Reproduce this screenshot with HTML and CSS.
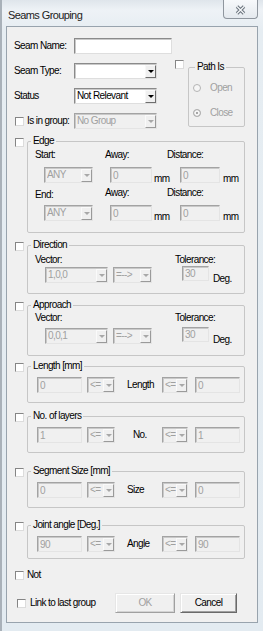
FILE: index.html
```html
<!DOCTYPE html>
<html lang="en">

<head>
    <meta charset="UTF-8">
    <title>Seams Grouping</title>
    <link rel="stylesheet" href="styles.css">
</head>

<body>
    <div class="window">
        <!-- Title bar -->
        <div class="titlebar">
            <span class="title">Seams Grouping</span>
            <span class="close">
                <svg width="11" height="10" viewBox="0 0 11 10">
                    <path d="M2 1.5 L9 8.5 M9 1.5 L2 8.5" stroke="#6a737d" stroke-width="3.4" />
                    <path d="M2 1.5 L9 8.5 M9 1.5 L2 8.5" stroke="#f6f8fa" stroke-width="1.3" />
                </svg>
            </span>
        </div>

        <div class="client">
            <!-- Name / type / status -->
            <div class="top">
                <div class="fields">
                    <label class="lbl">Seam Name:</label>
                    <input class="edit name" type="text">

                    <label class="lbl">Seam Type:</label>
                    <span class="combo wide"><select></select><span class="drop"></span></span>

                    <label class="lbl">Status</label>
                    <span class="combo wide"><select><option>Not Relevant</option></select><span class="drop"></span></span>

                    <label class="lbl lbl-chk"><input type="checkbox" class="chk">Is in group:</label>
                    <span class="combo wide off"><select disabled><option>No Group</option></select><span class="drop"></span></span>
                </div>

                <div class="path">
                    <input type="checkbox" class="chk">
                    <fieldset class="grp path-grp">
                        <legend>Path Is</legend>
                        <label class="radio"><input type="radio" name="path" disabled>Open</label>
                        <label class="radio second"><input type="radio" name="path" disabled checked>Close</label>
                    </fieldset>
                </div>
            </div>

            <!-- Edge -->
            <div class="section s-edge">
                <input type="checkbox" class="chk">
                <fieldset class="grp">
                    <legend>Edge</legend>
                    <div class="edge-body">
                        <span>Start:</span>
                        <span>Away:</span>
                        <span>Distance:</span>

                        <span class="combo off any"><select disabled><option>ANY</option></select><span class="drop"></span></span>
                        <span class="pair away"><input class="edit" type="text" value="0" disabled><span class="unit">mm</span></span>
                        <span class="pair dist"><input class="edit" type="text" value="0" disabled><span class="unit">mm</span></span>

                        <span class="end-lbl">End:</span>
                        <span class="up">Away:</span>
                        <span class="up">Distance:</span>

                        <span class="combo off any"><select disabled><option>ANY</option></select><span class="drop"></span></span>
                        <span class="pair away"><input class="edit" type="text" value="0" disabled><span class="unit">mm</span></span>
                        <span class="pair dist"><input class="edit" type="text" value="0" disabled><span class="unit">mm</span></span>
                    </div>
                </fieldset>
            </div>

            <!-- Direction -->
            <div class="section s-dir">
                <input type="checkbox" class="chk">
                <fieldset class="grp">
                    <legend>Direction</legend>
                    <div class="vec-body dir">
                        <span>Vector:</span>
                        <span>Tolerance:</span>
                        <span class="vsel">
                            <span class="combo off v1"><select disabled><option>1,0,0</option></select><span class="drop"></span></span>
                            <span class="combo off v2"><select disabled><option>=--&gt;</option></select><span class="drop"></span></span>
                        </span>
                        <span class="tol"><input class="edit" type="text" value="30" disabled><span class="unit">Deg.</span></span>
                    </div>
                </fieldset>
            </div>

            <!-- Approach -->
            <div class="section s-app">
                <input type="checkbox" class="chk">
                <fieldset class="grp">
                    <legend>Approach</legend>
                    <div class="vec-body app">
                        <span>Vector:</span>
                        <span>Tolerance:</span>
                        <span class="vsel">
                            <span class="combo off v1"><select disabled><option>0,0,1</option></select><span class="drop"></span></span>
                            <span class="combo off v2"><select disabled><option>=--&gt;</option></select><span class="drop"></span></span>
                        </span>
                        <span class="tol"><input class="edit" type="text" value="30" disabled><span class="unit">Deg.</span></span>
                    </div>
                </fieldset>
            </div>

            <!-- Length -->
            <div class="section s-len">
                <input type="checkbox" class="chk">
                <fieldset class="grp">
                    <legend>Length [mm]</legend>
                    <div class="row-body">
                        <input class="edit val" type="text" value="0" disabled>
                        <span class="combo off op"><select disabled><option>&lt;=</option></select><span class="drop"></span></span>
                        <span class="mid">Length</span>
                        <span class="combo off op2"><select disabled><option>&lt;=</option></select><span class="drop"></span></span>
                        <input class="edit val last" type="text" value="0" disabled>
                    </div>
                </fieldset>
            </div>

            <!-- Layers -->
            <div class="section s-lay">
                <input type="checkbox" class="chk">
                <fieldset class="grp">
                    <legend>No. of layers</legend>
                    <div class="row-body">
                        <input class="edit val" type="text" value="1" disabled>
                        <span class="combo off op"><select disabled><option>&lt;=</option></select><span class="drop"></span></span>
                        <span class="mid no">No.</span>
                        <span class="combo off op2"><select disabled><option>&lt;=</option></select><span class="drop"></span></span>
                        <input class="edit val last" type="text" value="1" disabled>
                    </div>
                </fieldset>
            </div>

            <!-- Segment size -->
            <div class="section s-seg">
                <input type="checkbox" class="chk">
                <fieldset class="grp">
                    <legend>Segment Size [mm]</legend>
                    <div class="row-body">
                        <input class="edit val" type="text" value="0" disabled>
                        <span class="combo off op"><select disabled><option>&lt;=</option></select><span class="drop"></span></span>
                        <span class="mid">Size</span>
                        <span class="combo off op2"><select disabled><option>&lt;=</option></select><span class="drop"></span></span>
                        <input class="edit val last" type="text" value="0" disabled>
                    </div>
                </fieldset>
            </div>

            <!-- Joint angle -->
            <div class="section s-joint">
                <input type="checkbox" class="chk">
                <fieldset class="grp">
                    <legend>Joint angle [Deg.]</legend>
                    <div class="row-body short">
                        <input class="edit val" type="text" value="90" disabled>
                        <span class="combo off op"><select disabled><option>&lt;=</option></select><span class="drop"></span></span>
                        <span class="mid">Angle</span>
                        <span class="combo off op2"><select disabled><option>&lt;=</option></select><span class="drop"></span></span>
                        <input class="edit val last" type="text" value="90" disabled>
                    </div>
                </fieldset>
            </div>

            <label class="opt"><input type="checkbox" class="chk">Not</label>

            <!-- Bottom buttons -->
            <div class="actions">
                <input type="checkbox" class="chk">
                <span class="link-lbl">Link to last group</span>
                <button class="btn ok" disabled>OK</button>
                <button class="btn cancel">Cancel</button>
            </div>
        </div>
    </div>
</body>

</html>
```

FILE: styles.css
```css
* {
    box-sizing: border-box;
}

body {
    margin: 0;
    font-family: "Liberation Sans", Arial, sans-serif;
    font-size: 10px;
    line-height: 12px;
    letter-spacing: -0.6px;
    color: #000;
    background: #fff;
}

/* Window frame */
.window {
    width: 263px;
    height: 631px;
    background: linear-gradient(#dfe5eb, #eef2f6 10px, #e6edf2 30px, #e3ebf1);
    box-shadow: inset 2px 0 #a9b1b9;
    overflow: hidden;
}

.titlebar {
    display: flex;
    align-items: flex-start;
    height: 26px;
}

.title {
    padding: 9px 0 0 8px;
    font-size: 11px;
    color: #222;
}

.close {
    margin-left: auto;
    margin-right: 5px;
    width: 35px;
    height: 19px;
    padding-top: 2px;
    display: flex;
    justify-content: center;
    align-items: center;
    border: 1px solid #8f969e;
    border-top: none;
    border-radius: 0 0 4px 4px;
    background: linear-gradient(#f7f9fb, #e4e9ee);
}

.client {
    margin-left: 6px;
    width: 252px;
    height: 597px;
    border: 1px solid #98a3ad;
    background: #f0f0f0;
}

/* Generic controls */
.chk {
    appearance: none;
    margin: 0;
    flex: none;
    width: 9px;
    height: 9px;
    background: #fff;
    border: 1px solid;
    border-color: #858585 #dcdcdc #dcdcdc #858585;
}

.edit {
    height: 16px;
    margin: 0;
    padding: 0 2px;
    font: inherit;
    letter-spacing: inherit;
    color: #000;
    background: #fff;
    border: 1px solid;
    border-color: #8a8a8a #dedede #dedede #8a8a8a;
    box-shadow: inset 1px 1px #c9c9c9;
    outline: none;
}

.edit:disabled {
    background: #f0f0f0;
    color: #a0a0a0;
    border-color: #a3a3a3 #e4e4e4 #e4e4e4 #a3a3a3;
}

.combo {
    display: flex;
    height: 16px;
    background: #fff;
    border: 1px solid;
    border-color: #8a8a8a #dedede #dedede #8a8a8a;
    box-shadow: inset 1px 1px #c9c9c9;
}

.combo select {
    appearance: none;
    flex: 1;
    min-width: 0;
    height: 100%;
    margin: 0;
    padding: 0 0 0 2px;
    border: none;
    background: transparent;
    font: inherit;
    letter-spacing: inherit;
    color: #000;
    opacity: 1;
}

.drop {
    flex: none;
    width: 11px;
    margin: 1px 0 0;
    display: flex;
    align-items: center;
    justify-content: center;
    background: #f0f0f0;
    border: 1px solid;
    border-color: #f8f8f8 #6e6e6e #6e6e6e #f8f8f8;
}

.drop::after {
    content: "";
    border-left: 3px solid transparent;
    border-right: 3px solid transparent;
    border-top: 3px solid #000;
}

.combo.off {
    background: #f0f0f0;
    border-color: #a3a3a3 #e4e4e4 #e4e4e4 #a3a3a3;
}

.combo.off select {
    color: #a0a0a0;
}

.combo.off .drop {
    border-color: #fafafa #9a9a9a #9a9a9a #fafafa;
}

.combo.off .drop::after {
    border-top-color: #a8a8a8;
}

/* Group boxes */
.grp {
    margin: 0;
    padding: 0;
    min-width: 0;
    border: 1px solid #c6c6c6;
    border-radius: 2px;
}

.grp legend {
    margin-left: 3px;
    padding: 0 2px;
    line-height: 12px;
    white-space: nowrap;
}

.unit {
    line-height: 12px;
}

/* Top area */
.top {
    display: flex;
    align-items: flex-start;
}

.fields {
    display: grid;
    grid-template-columns: 60px 98px;
    grid-auto-rows: 16px;
    row-gap: 9px;
    align-items: center;
    padding: 11px 0 0 7px;
    white-space: nowrap;
}

.name {
    width: 98px;
}

.combo.wide {
    width: 83px;
}

.lbl-chk {
    display: flex;
    align-items: center;
    gap: 3px;
    margin-left: 1px;
}

.path {
    display: flex;
    align-items: flex-start;
    margin: 33px 0 0 3px;
}

.path-grp {
    width: 57px;
    margin: 1px 0 0 4px;
    padding: 9px 0 7px 4px;
}

.path-grp legend {
    margin-left: 2px;
}

.radio {
    display: flex;
    align-items: center;
    height: 12px;
    color: #a0a0a0;
}

.radio.second {
    margin-top: 13px;
}

.radio input {
    appearance: none;
    margin: 0 9px 0 0;
    width: 8px;
    height: 8px;
    border-radius: 50%;
    border: 1px solid #b4b4b4;
    background: #f6f6f6;
}

.radio input:checked {
    background: #8c8c8c;
    box-shadow: inset 0 0 0 2px #f6f6f6;
}

/* Sections with a check box and a group box */
.section {
    display: flex;
    align-items: flex-start;
    padding-left: 8px;
}

.section > .chk {
    margin-top: 3px;
}

.section > .grp {
    width: 218px;
    margin-left: 3px;
}

.s-edge { margin-top: 6px; }
.s-dir { margin-top: 6px; }
.s-app { margin-top: 5px; }
.s-len { margin-top: 4px; }
.s-lay { margin-top: 7px; }
.s-seg { margin-top: 12px; }
.s-joint { margin-top: 11px; }

/* Edge */
.edge-body {
    display: grid;
    grid-template-columns: 70px 62px 1fr;
    grid-template-rows: 12px 22px 18px 20px;
    align-items: end;
    padding: 2px 0 11px 7px;
}

.edge-body .up {
    margin-bottom: 2px;
}

.combo.any {
    width: 49px;
    margin-left: 9px;
}

.pair {
    display: flex;
    align-items: flex-end;
}

.pair .unit {
    margin-bottom: -2px;
}

.away .edit {
    width: 42px;
    margin-left: 5px;
}

.away .unit {
    margin-left: 2px;
}

.dist .edit {
    width: 40px;
    margin-left: 13px;
}

.dist .unit {
    margin-left: 3px;
}

/* Direction / approach */
.vec-body {
    display: grid;
    grid-template-columns: 140px 1fr;
    align-items: end;
    padding-left: 7px;
}

.vec-body.dir {
    grid-template-rows: 12px 17px;
    padding-top: 3px;
    padding-bottom: 10px;
}

.vec-body.app {
    grid-template-rows: 12px 20px;
    padding-top: 1px;
    padding-bottom: 11px;
}

.vsel {
    display: flex;
}

.combo.v1 {
    width: 63px;
    margin-left: 10px;
}

.combo.v2 {
    width: 39px;
    margin-left: 5px;
}

.tol {
    display: flex;
    align-items: flex-end;
    margin-bottom: 2px;
}

.tol .edit {
    width: 27px;
    height: 15px;
    margin-left: 7px;
}

.tol .unit {
    margin: 0 0 -4px 4px;
}

/* Single line comparisons */
.row-body {
    display: flex;
    align-items: center;
    padding: 5px 0 9px 9px;
}

.row-body.short {
    padding-bottom: 6px;
}

.edit.val {
    width: 45px;
}

.combo.op {
    width: 28px;
    margin-left: 5px;
}

.mid {
    width: 35px;
    margin-left: 12px;
}

.mid.no {
    padding-left: 6px;
}

.combo.op2 {
    width: 26px;
}

.edit.last {
    margin-left: 7px;
}

/* Bottom */
.opt {
    display: flex;
    align-items: center;
    gap: 3px;
    height: 12px;
    margin-top: 10px;
    padding-left: 8px;
}

.actions {
    display: flex;
    align-items: center;
    height: 20px;
    margin-top: 12px;
    padding-left: 10px;
}

.link-lbl {
    width: 85px;
    margin-left: 4px;
    white-space: nowrap;
}

.btn {
    height: 20px;
    margin: 0;
    padding: 0;
    font: inherit;
    letter-spacing: inherit;
    color: #000;
    background: #f0f0f0;
    border: 1px solid;
    border-color: #e6e6e6 #6a6a6a #6a6a6a #e6e6e6;
    box-shadow: inset 1px 1px #fff, inset -1px -1px #a0a0a0;
}

.btn.ok {
    width: 60px;
    color: #a0a0a0;
    border-color: #e6e6e6 #a0a0a0 #a0a0a0 #e6e6e6;
    box-shadow: inset 1px 1px #fff, inset -1px -1px #d4d4d4;
}

.btn.cancel {
    width: 57px;
    margin-left: 5px;
}
```
